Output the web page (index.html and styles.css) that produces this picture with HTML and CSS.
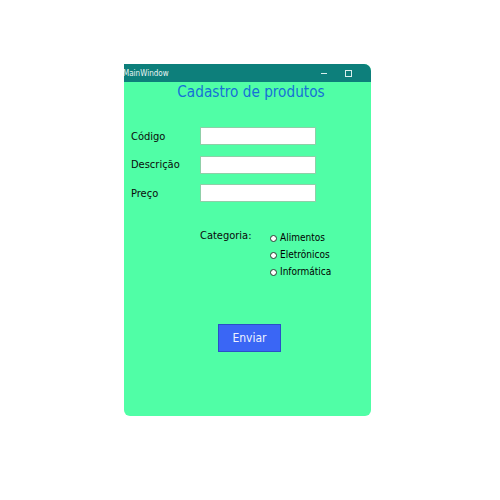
FILE: index.html
```html
<!DOCTYPE html>
<html>
<head>
<meta charset="utf-8">
<link rel="stylesheet" href="styles.css">
</head>
<body>
<div class="window">
  <div class="titlebar">
    <span class="title-text">MainWindow</span>
    <div class="controls">
      <span class="ctl-min"></span>
      <span class="ctl-max"></span>
    </div>
  </div>
  <div class="content">
    <h1 class="heading">Cadastro de produtos</h1>
    <div class="form">
      <label class="lbl">Código</label><div class="box"></div>
      <label class="lbl">Descrição</label><div class="box"></div>
      <label class="lbl">Preço</label><div class="box"></div>
    </div>
    <div class="category">
      <span class="cat-label">Categoria:</span>
      <div class="radios">
        <div class="radio"><span class="dot"></span>Alimentos</div>
        <div class="radio"><span class="dot"></span>Eletrônicos</div>
        <div class="radio"><span class="dot"></span>Informática</div>
      </div>
    </div>
    <div class="actions">
      <button class="send">Enviar</button>
    </div>
  </div>
</div>
</body>
</html>
```
FILE: styles.css
```css
html, body {
  margin: 0;
  padding: 0;
  background: #ffffff;
}
body {
  padding: 64px 0 0 124px;
  font-family: "DejaVu Sans Condensed", "DejaVu Sans", sans-serif;
}
.window {
  width: 247px;
  height: 352px;
  background: #50fea6;
  border-radius: 0 7px 6px 6px;
  overflow: hidden;
  display: flex;
  flex-direction: column;
}
.titlebar {
  height: 18px;
  background: #0d7f7b;
  display: flex;
  align-items: center;
  justify-content: space-between;
  overflow: hidden;
}
.title-text {
  color: #e8f4f3;
  font-size: 8px;
  margin-left: -1px;
}
.controls {
  display: flex;
  align-items: center;
  gap: 18px;
  margin-right: 19px;
}
.ctl-min {
  width: 6px;
  height: 1px;
  background: #d8eeed;
}
.ctl-max {
  width: 5px;
  height: 5px;
  border: 1px solid #d8eeed;
}
.content {
  flex: 1;
  display: flex;
  flex-direction: column;
}
.heading {
  margin: 0;
  font-weight: normal;
  font-size: 15.2px;
  color: #1670d6;
  text-align: center;
  padding-left: 7px;
  line-height: 20px;
  height: 20px;
}
.form {
  margin-top: 25px;
  display: grid;
  grid-template-columns: 69px 116px;
  grid-auto-rows: 18px;
  row-gap: 10.5px;
  padding-left: 7px;
  align-items: center;
}
.lbl {
  font-size: 11px;
  color: #0a0a0a;
}
.box {
  height: 16px;
  background: #fff;
  border: 1px solid #8fcfa8;
}
.category {
  margin-top: 27px;
  margin-left: 76px;
  display: flex;
}
.cat-label {
  width: 70px;
  font-size: 11px;
  color: #0a0a0a;
  line-height: 14px;
}
.radios {
  display: flex;
  flex-direction: column;
  gap: 3px;
  padding-top: 2px;
}
.radio {
  display: flex;
  align-items: center;
  gap: 3px;
  font-size: 10px;
  line-height: 14px;
  color: #000;
}
.dot {
  width: 5px;
  height: 5px;
  border-radius: 50%;
  background: #fff;
  border: 1px solid #2a3a30;
}
.actions {
  margin-top: 45px;
  padding-left: 94px;
}
.send {
  width: 63px;
  height: 28px;
  background: #3a66f5;
  border: 1px solid #2a4fc8;
  color: #eef2ff;
  font-size: 12px;
  font-family: "DejaVu Sans Condensed", "DejaVu Sans", sans-serif;
  padding: 0;
}
```
